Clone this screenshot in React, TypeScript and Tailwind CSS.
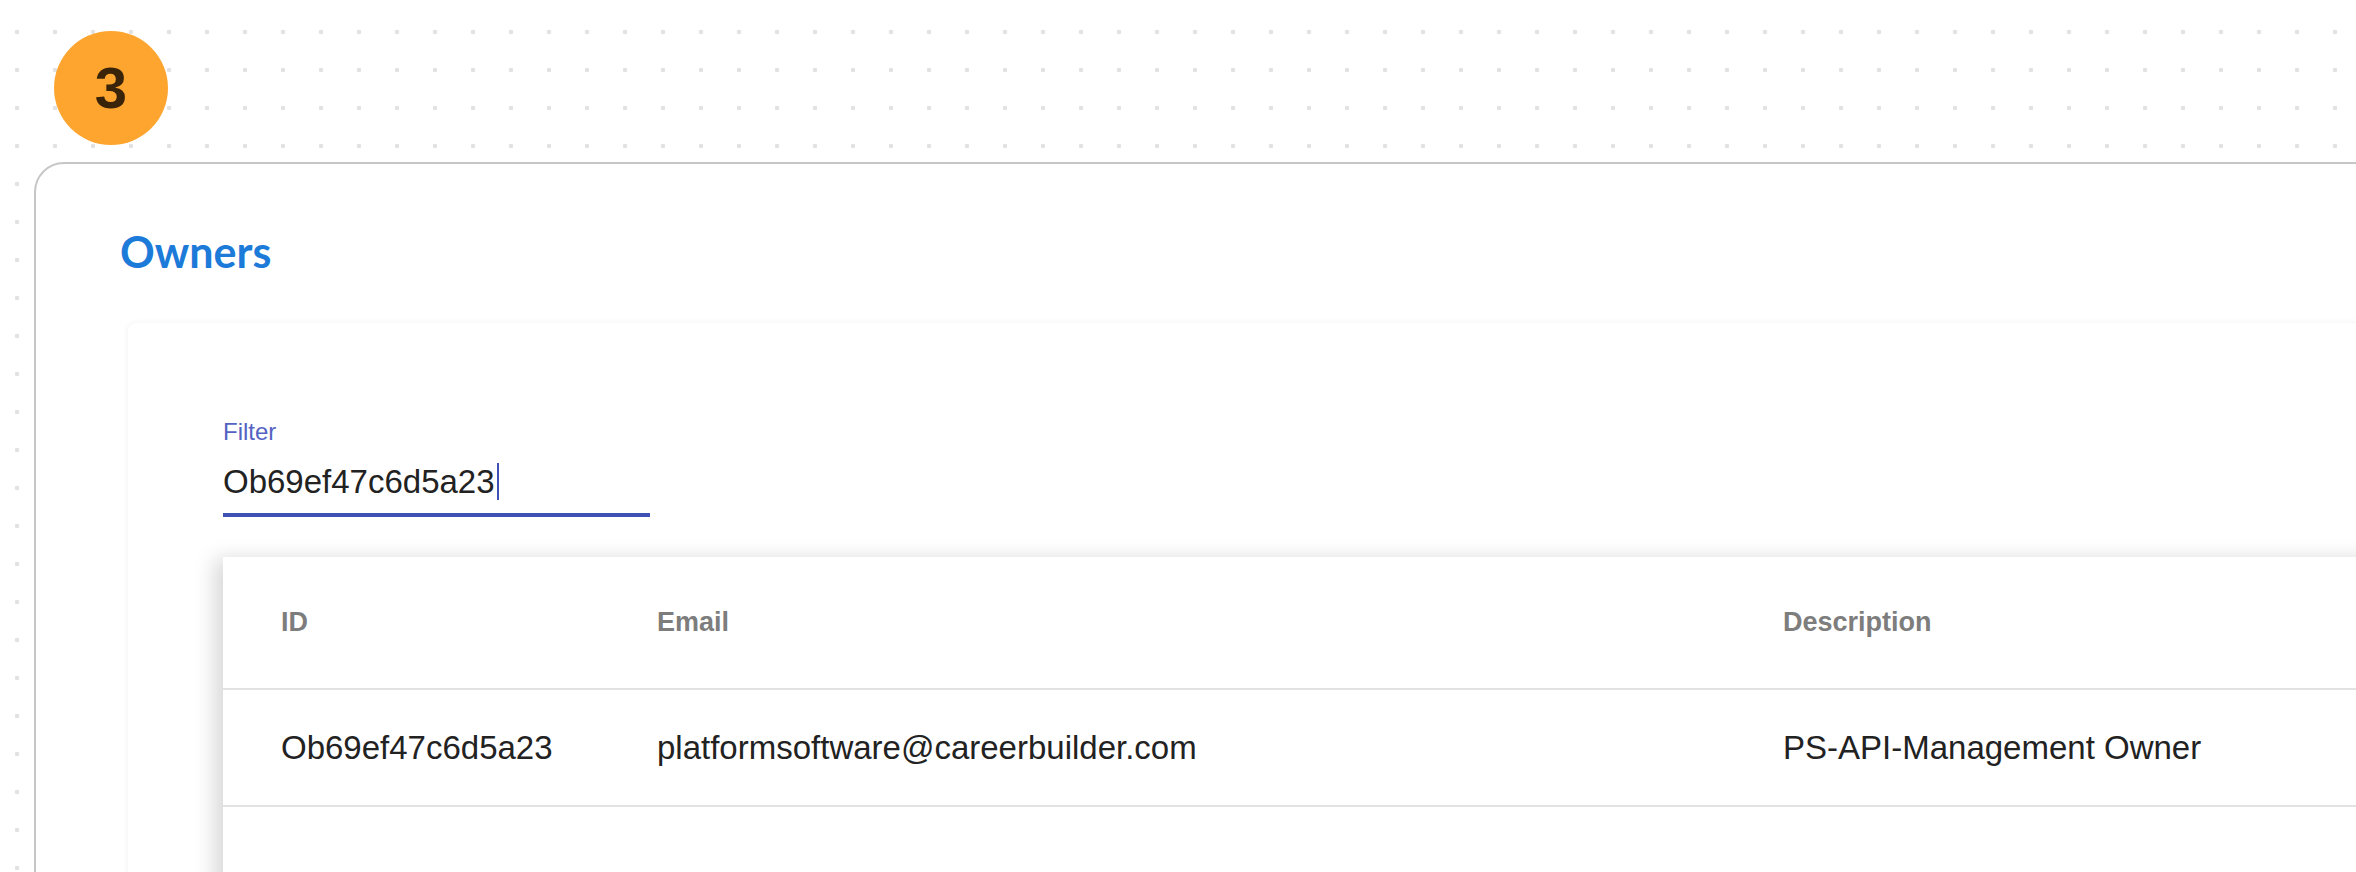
export default function App() {
  const owners = [
    { id: 'Ob69ef47c6d5a23', email: 'platformsoftware@careerbuilder.com', description: 'PS-API-Management Owner' },
  ];

  return (
    <div className="min-h-screen h-[872px] overflow-hidden bg-white bg-[radial-gradient(circle,#e2e2e2_2px,transparent_2.6px)] bg-[length:38px_38px] bg-[position:-2px_13px] font-['Liberation_Sans',Arial,sans-serif]">
      <div className="pt-[31px] pl-[54px]">
        <div className="w-[114px] h-[114px] rounded-full bg-[#fea52f] flex items-center justify-center">
          <span className="text-[58px] font-bold leading-none text-[#3a2409]">3</span>
        </div>
      </div>

      <div className="mt-[17px] ml-[34px] w-[2400px] h-[800px] bg-white border-2 border-[#c6c6c6] rounded-tl-[30px] pl-[84px] pt-[66px]">
        <h1 className="font-['Lato',sans-serif] font-bold text-[43px] leading-none text-[#1c7ad9]">Owners</h1>

        <div className="mt-[50px] ml-[8px] bg-white rounded-lg shadow-[0_0_6px_rgba(0,0,0,0.06)] h-[700px] pl-[95px] pt-[97px]">
          <div className="text-[24px] leading-none text-[#5463c2]">Filter</div>
          <div className="mt-[19px] w-[427px] border-b-4 border-[#3f51b5] pb-[13px] flex items-center">
            <span className="text-[33px] leading-none text-[#222]">Ob69ef47c6d5a23</span>
            <span className="ml-[2px] w-[2px] h-[37px] bg-[#3f51b5]" />
          </div>

          <div className="mt-[40px] bg-white shadow-[-8px_2px_20px_rgba(0,0,0,0.16)] h-[400px]">
            <div className="grid grid-cols-[376px_1126px_1fr] pl-[58px] h-[133px] items-center border-b-2 border-[#e2e2e2] text-[27px] font-bold text-[#7d7d7d]">
              <div>ID</div>
              <div>Email</div>
              <div>Description</div>
            </div>
            {owners.map((o) => (
              <div key={o.id} className="grid grid-cols-[376px_1126px_1fr] pl-[58px] h-[117px] items-center border-b-2 border-[#e2e2e2] text-[33px] text-[#222]">
                <div>{o.id}</div>
                <div>{o.email}</div>
                <div>{o.description}</div>
              </div>
            ))}
          </div>
        </div>
      </div>
    </div>
  );
}
